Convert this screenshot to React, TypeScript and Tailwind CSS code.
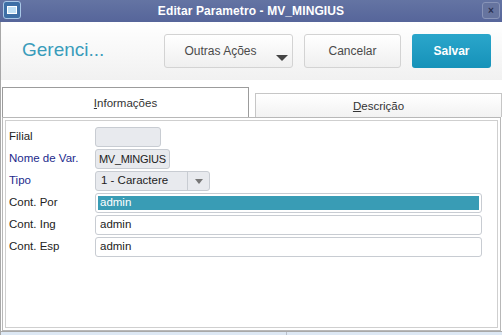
import React from "react";

const Field = ({ label, blue, children }: { label: string; blue?: boolean; children: React.ReactNode }) => (
  <div className="flex items-center h-[22px]">
    <div className={`w-[89px] pl-[3px] text-[11.5px] ${blue ? "text-[#1c2a8c]" : "text-[#222]"}`}>{label}</div>
    {children}
  </div>
);

export default function App() {
  return (
    <div
      className="w-[502px] h-[335px] flex flex-col bg-white overflow-hidden"
      style={{ fontFamily: '"Liberation Sans", Arial, sans-serif' }}
    >
      {/* Title bar */}
      <div className="h-[22px] bg-gradient-to-b from-[#6474a3] to-[#56659a] flex items-center relative">
        <div className="absolute left-[3px] top-[1px] w-[18px] h-[18px] rounded-[3px] border border-[#a9c7e6] bg-[#3d6fa6] flex items-center justify-center">
          <div className="w-[10px] h-[8px] bg-[#bfe0f5] border border-white"></div>
        </div>
        <div className="flex-1 text-center text-white text-[12px] font-bold tracking-[0.1px]">Editar Parametro - MV_MINGIUS</div>
        <div className="absolute right-[2px] top-[2px] w-[18px] h-[17px] rounded-[3px] border border-[#8894b8] bg-[#66749f] flex items-center justify-center text-[#2a3050] text-[10px] font-bold leading-none">
          ×
        </div>
      </div>

      {/* Toolbar */}
      <div className="h-[58px] bg-gradient-to-b from-white to-[#f1f1f1] flex items-center border-l border-[#a8a8a8]">
        <div className="w-[163px] pl-[21px] text-[19px] text-[#3a9cbb] pb-[1px]">Gerenci...</div>
        <div className="relative w-[129px] h-[34px] rounded-[3px] border border-[#d3d3d3] bg-gradient-to-b from-white to-[#efefef] flex items-center justify-center text-[12px] text-[#4a4a4a] pr-[16px]">
          Outras Ações
          <div className="absolute right-[4px] top-[20px] w-0 h-0 border-l-[6px] border-r-[6px] border-t-[6px] border-l-transparent border-r-transparent border-t-[#444]"></div>
        </div>
        <div className="ml-[11px] w-[97px] h-[34px] rounded-[3px] border border-[#d3d3d3] bg-gradient-to-b from-white to-[#efefef] flex items-center justify-center text-[12px] text-[#4a4a4a]">
          Cancelar
        </div>
        <div className="ml-[11px] w-[79px] h-[34px] rounded-[3px] bg-gradient-to-b from-[#2aa6cb] to-[#1592b9] flex items-center justify-center text-[12px] font-bold text-white">
          Salvar
        </div>
      </div>

      {/* Tabs */}
      <div className="h-[37px] flex items-end border-l border-[#a8a8a8] pt-[7px]">
        <div className="ml-[1px] w-[247px] h-[30px] border border-b-0 border-[#9c9c9c] bg-white flex items-center justify-center text-[11.5px] text-[#333] pt-[2px]">
          <span><span className="underline">I</span>nformações</span>
        </div>
        <div className="ml-[6px] w-[247px] h-[24px] border border-b-0 border-[#c6c6c6] bg-gradient-to-b from-white to-[#f2f2f2] flex items-center justify-center text-[11.5px] text-[#333] pt-[2px]">
          <span><span className="underline">D</span>escrição</span>
        </div>
      </div>

      {/* Panel */}
      <div className="flex-1 flex flex-col border-l border-[#a8a8a8]">
        <div className="h-[214px] mx-[1px] border border-[#b8b8b8] p-[2px]">
          <div className="h-full border border-[#cfcfcf] pt-[5px] flex flex-col">
            <Field label="Filial">
              <div className="w-[66px] h-[20px] rounded-[3px] border border-[#c8ccd2] bg-[#e8eaee]"></div>
            </Field>
            <Field label="Nome de Var." blue>
              <div className="h-[20px] rounded-[3px] border border-[#c8ccd2] bg-[#e8eaee] flex items-center px-[3px] text-[11px] tracking-[-0.3px] text-[#222] whitespace-nowrap">
                MV_MINGIUS
              </div>
            </Field>
            <Field label="Tipo" blue>
              <div className="w-[115px] h-[20px] rounded-[3px] border border-[#c8ccd2] bg-[#e8eaee] flex items-center text-[11.5px] text-[#222]">
                <div className="flex-1 pl-[5px]">1 - Caractere</div>
                <div className="w-[22px] h-full border-l border-[#c8ccd2] flex items-center justify-center">
                  <div className="w-0 h-0 border-l-[4px] border-r-[4px] border-t-[5px] border-l-transparent border-r-transparent border-t-[#777]"></div>
                </div>
              </div>
            </Field>
            <Field label="Cont. Por">
              <div className="w-[387px] h-[20px] rounded-[3px] border border-[#c8ccd2] bg-white p-[2px]">
                <div className="h-full bg-[#399cb5] flex items-center pl-[2px] text-[11.5px] text-white">admin</div>
              </div>
            </Field>
            <Field label="Cont. Ing">
              <div className="w-[387px] h-[20px] rounded-[3px] border border-[#c8ccd2] bg-white flex items-center pl-[4px] text-[11.5px] text-[#222]">admin</div>
            </Field>
            <Field label="Cont. Esp">
              <div className="w-[387px] h-[20px] rounded-[3px] border border-[#c8ccd2] bg-white flex items-center pl-[4px] text-[11.5px] text-[#222]">admin</div>
            </Field>
          </div>
        </div>
        <div className="flex-1 flex bg-[#dde8f4] border-t border-[#a8a8a8]">
          <div className="w-[286px] border-r border-[#b8c0cc]"></div>
        </div>
      </div>
    </div>
  );
}
